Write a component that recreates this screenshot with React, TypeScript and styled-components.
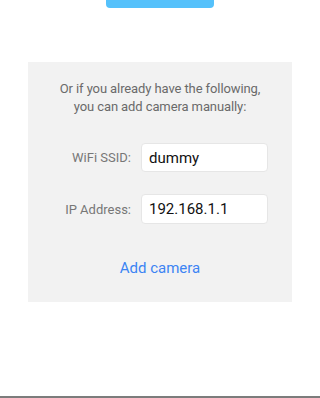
import React from "react";
import styled, { createGlobalStyle } from "styled-components";

const Global = createGlobalStyle`
  html, body { margin: 0; padding: 0; background: #ffffff; }
  body { font-family: Roboto, "Noto Sans", "Liberation Sans", sans-serif; }
  * { box-sizing: border-box; }
`;

const Page = styled.div`
  width: 320px;
  height: 398px;
  display: flex;
  flex-direction: column;
  align-items: center;
  background: #ffffff;
  border-bottom: 2px solid #7c7c7c;
  overflow: hidden;
`;

const TopButton = styled.button`
  width: 108px;
  height: 8px;
  padding: 0;
  border: none;
  background: #55c1fb;
  border-radius: 0 0 4px 4px;
  flex-shrink: 0;
`;

const Panel = styled.section`
  margin-top: 54px;
  width: 264px;
  height: 240px;
  background: #f2f2f2;
  display: flex;
  flex-direction: column;
  align-items: stretch;
  padding-top: 18px;
`;

const Intro = styled.p`
  margin: 0;
  text-align: center;
  font-size: 13px;
  line-height: 18px;
  letter-spacing: -0.1px;
  color: #6a6a6a;
`;

const Form = styled.div`
  margin-top: 27px;
  display: grid;
  grid-template-columns: 103px 127px;
  column-gap: 10px;
  row-gap: 22px;
  align-items: center;
`;

const Label = styled.label`
  text-align: right;
  font-size: 13px;
  color: #777777;
`;

const Field = styled.div<{ $h: number }>`
  height: ${(p) => p.$h}px;
  background: #ffffff;
  border: 1px solid #e6e6e6;
  border-radius: 4px;
  display: flex;
  align-items: center;
  padding-left: 7px;
  font-size: 15px;
  color: #111111;
`;

const Action = styled.button`
  margin-top: 34px;
  align-self: center;
  border: none;
  background: transparent;
  padding: 0;
  font-family: inherit;
  font-size: 15px;
  line-height: 20px;
  color: #3c84f4;
`;

export default function App() {
  return (
    <>
      <Global />
      <Page>
        <TopButton aria-label="Setup camera" />
        <Panel>
          <Intro>
            Or if you already have the following,
            <br />
            you can add camera manually:
          </Intro>
          <Form>
            <Label>WiFi SSID:</Label>
            <Field $h={29}>dummy</Field>
            <Label>IP Address:</Label>
            <Field $h={30}>192.168.1.1</Field>
          </Form>
          <Action>Add camera</Action>
        </Panel>
      </Page>
    </>
  );
}
